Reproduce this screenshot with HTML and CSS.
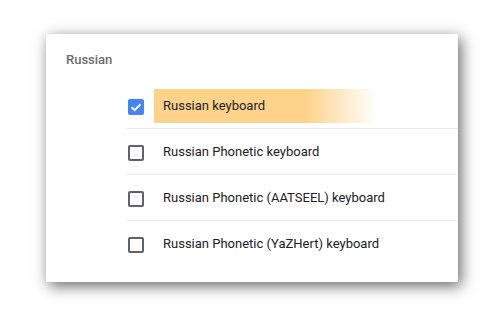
FILE: index.html
```html
<!DOCTYPE html>
<html>
<head>
<meta charset="utf-8">
<link rel="stylesheet" href="styles.css">
</head>
<body>
<div class="card">
  <div class="section-title">Russian</div>
  <div class="list">
    <div class="row">
      <span class="checkbox checked">
        <svg viewBox="0 0 16 16" width="16" height="16"><path d="M3.6 8.2 L6.6 11.1 L12.5 5.2" fill="none" stroke="#fff" stroke-width="2"/></svg>
      </span>
      <span class="label highlight">Russian keyboard</span>
    </div>
    <div class="row">
      <span class="checkbox"></span>
      <span class="label">Russian Phonetic keyboard</span>
    </div>
    <div class="row">
      <span class="checkbox"></span>
      <span class="label">Russian Phonetic (AATSEEL) keyboard</span>
    </div>
    <div class="row">
      <span class="checkbox"></span>
      <span class="label">Russian Phonetic (YaZHert) keyboard</span>
    </div>
  </div>
</div>
</body>
</html>
```

FILE: styles.css
```css
html, body {
  margin: 0;
  background: #ffffff;
}
body {
  min-height: 322px;
  box-sizing: border-box;
  padding: 34px 0 0 46px;
  font-family: Roboto, "Liberation Sans", sans-serif;
}
.card {
  width: 412px;
  height: 248px;
  box-sizing: border-box;
  background: #fff;
  box-shadow: 3px 4px 14px rgba(0, 0, 0, 0.6);
  padding-top: 16px;
}
.section-title {
  padding-left: 20px;
  font-size: 13px;
  line-height: 20px;
  font-weight: 500;
  color: #6b6b6b;
}
.list {
  margin: 13px 0 0 80px;
}
.row {
  height: 45px;
  display: flex;
  align-items: center;
  border-top: 1px solid #e8eaed;
}
.row:first-child {
  border-top: none;
}
.checkbox {
  box-sizing: border-box;
  width: 16px;
  height: 16px;
  margin: 2px 10px 0 2px;
  border: 2px solid #5f6368;
  border-radius: 2px;
  flex: none;
}
.checkbox.checked {
  border: none;
  background: #4285f4;
  display: flex;
}
.label {
  font-size: 13px;
  color: #202124;
  padding-left: 9px;
  line-height: 34px;
}
.highlight {
  width: 223px;
  box-sizing: border-box;
  background: linear-gradient(to right, #fdd38a 0%, #fdd38a 68%, rgba(253, 211, 138, 0) 100%);
}
```
